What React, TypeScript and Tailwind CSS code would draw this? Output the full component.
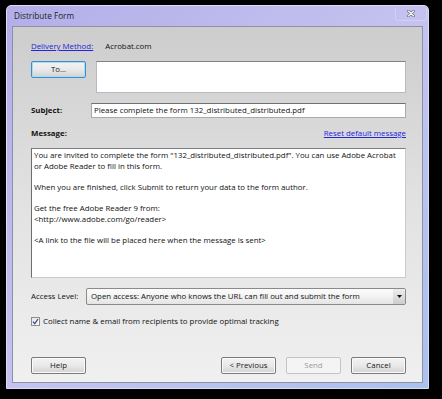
import React from "react";

const font = { fontFamily: '"Open Sans", "Noto Sans", Arial, sans-serif' };

function WinButton({
  label,
  className = "",
  focused = false,
  disabled = false,
}: {
  label: string;
  className?: string;
  focused?: boolean;
  disabled?: boolean;
}) {
  if (disabled) {
    return (
      <div
        className={`flex h-[17px] w-[55px] items-center justify-center rounded-[2px] border border-[#c2c5c8] bg-[#f4f4f4] text-[#9a9a9a] ${className}`}
      >
        {label}
      </div>
    );
  }
  return (
    <div
      className={`flex h-[17px] w-[55px] items-center justify-center rounded-[2px] border bg-linear-to-b from-[#f3f3f3] via-[#e9e9e9] to-[#d2d2d2] text-[#1a1a1a] ${
        focused
          ? "border-[#3d8ec9] shadow-[inset_0_0_0_1px_#a8dcf5]"
          : "border-[#7a7a7a] shadow-[inset_0_0_0_1px_#fbfbfb]"
      } ${className}`}
    >
      {label}
    </div>
  );
}

export default function App() {
  const message = [
    'You are invited to complete the form "132_distributed_distributed.pdf". You can use Adobe Acrobat',
    "or Adobe Reader to fill in this form.",
    "",
    "When you are finished, click Submit to return your data to the form author.",
    "",
    "Get the free Adobe Reader 9 from:",
    "<http://www.adobe.com/go/reader>",
    "",
    "<A link to the file will be placed here when the message is sent>",
  ];

  return (
    <div className="h-[399px] w-[442px] overflow-hidden bg-black pl-[6px] pt-[5px]" style={font}>
      <div className="flex h-[384px] w-[423px] flex-col rounded-t-[5px] border border-[#dcdcf4] bg-linear-to-br from-[#b3aee8] via-[#c5c2f0] to-[#a9c2ec] px-[5px] pb-[5px]">
        {/* title bar */}
        <div className="flex h-[20px] items-center justify-between">
          <span className="pl-[2px] pt-[1px] text-[8.2px] text-[#1c1c2c]">Distribute Form</span>
          <div className="mr-[-4px] mt-[-4px] flex h-[13px] w-[32px] items-center justify-center rounded-b-[3px] border border-t-0 border-[#d8d8f0]/70">
            <svg width="8" height="7" viewBox="0 0 8 7">
              <path d="M1.3 1 L6.7 6 M6.7 1 L1.3 6" stroke="#6a6a80" strokeWidth="2.4" strokeLinecap="round" />
              <path d="M1.3 1 L6.7 6 M6.7 1 L1.3 6" stroke="#ffffff" strokeWidth="1.1" strokeLinecap="round" />
            </svg>
          </div>
        </div>

        {/* client area */}
        <div className="flex flex-1 flex-col border border-[#8e90a6] bg-linear-to-b from-[#cdcdcd] via-[#e2e2e2] to-[#f0f0f0] pl-[18px] pr-[16px] text-[7.85px] leading-[11px] text-[#111]">
          <div className="mt-[14px] flex items-center">
            <span className="text-[#2424dc] underline">Delivery Method:</span>
            <span className="ml-[12px]">Acrobat.com</span>
          </div>

          <div className="mt-[9px] flex items-start">
            <WinButton label="To..." focused />
            <div className="ml-[10px] h-[32px] flex-1 border border-[#b8bac2] border-t-[#7f8186] bg-white" />
          </div>

          <div className="mt-[10px] flex items-center">
            <span className="w-[60px] font-bold">Subject:</span>
            <div className="flex h-[15px] flex-1 items-center border border-[#a8aab0] border-t-[#6e7076] bg-white pl-[2px]">
              Please complete the form 132_distributed_distributed.pdf
            </div>
          </div>

          <div className="mt-[10px] flex items-center justify-between">
            <span className="font-bold">Message:</span>
            <span className="text-[#2424dc] underline">Reset default message</span>
          </div>

          <div className="mt-[9px] h-[130px] border border-[#c8cad0] border-l-[#6c6e74] border-t-[#7a7c82] bg-white pl-[2px] pt-[1px] leading-[10.6px]">
            {message.map((line, i) => (
              <div key={i} className="h-[10.6px] whitespace-nowrap">
                {line}
              </div>
            ))}
          </div>

          <div className="mt-[10px] flex items-center">
            <span className="w-[55px]">Access Level:</span>
            <div className="flex h-[17px] flex-1 items-center rounded-[2px] border border-[#8a8a8a] bg-linear-to-b from-[#fbfbfb] via-[#f3f3f3] to-[#e4e4e4] pl-[4px]">
              <span className="flex-1">Open access: Anyone who knows the URL can fill out and submit the form</span>
              <div className="flex h-full w-[12px] items-center justify-center bg-linear-to-b from-[#ededed] to-[#cdcdcd]">
                <svg width="5" height="3" viewBox="0 0 5 3">
                  <path d="M0 0 H5 L2.5 3 Z" fill="#111" />
                </svg>
              </div>
            </div>
          </div>

          <div className="mt-[11px] flex items-center">
            <div className="flex h-[9px] w-[9px] items-center justify-center border border-[#8c8e92] bg-linear-to-br from-[#e4e6ea] to-[#fbfbfb]">
              <svg width="7" height="7" viewBox="0 0 7 7">
                <path d="M1 3.6 L2.8 5.6 L6 1" stroke="#3b4f8a" strokeWidth="1.3" fill="none" />
              </svg>
            </div>
            <span className="ml-[3px]">Collect name &amp; email from recipients to provide optimal tracking</span>
          </div>

          <div className="mt-[30px] flex items-center">
            <WinButton label="Help" />
            <div className="flex-1" />
            <WinButton label="< Previous" />
            <WinButton label="Send" disabled className="ml-[10px]" />
            <WinButton label="Cancel" className="ml-[10px]" />
          </div>
        </div>
      </div>
    </div>
  );
}
